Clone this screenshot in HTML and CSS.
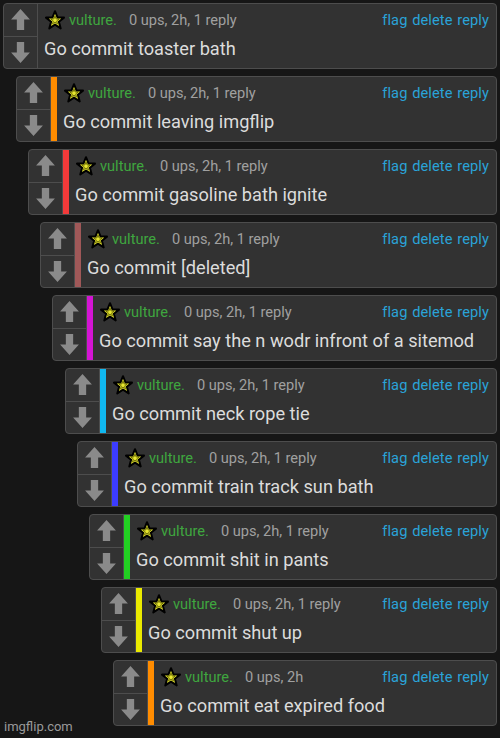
FILE: index.html
```html
<!DOCTYPE html>
<html lang="en">
<head>
    <meta charset="UTF-8">
    <meta name="viewport" content="width=device-width, initial-scale=1.0">
    <title>imgflip comments</title>
    <link rel="stylesheet" href="styles.css">
</head>
<body>
    <svg width="0" height="0" class="defs">
        <defs>
            <symbol id="star" viewBox="0 0 20 20">
                <path d="M10 1.2 L12.5 7.4 L19 7.6 L13.9 11.7 L15.7 18.4 L10 14.6 L4.3 18.4 L6.1 11.7 L1 7.6 L7.5 7.4 Z" fill="#e8e830" stroke="#000" stroke-width="2" stroke-linejoin="round"/>
                <path d="M10 6 L11.1 8.9 L14.1 9 L11.7 10.9 L12.5 13.8 L10 12.1 L7.5 13.8 L8.3 10.9 L5.9 9 L8.9 8.9 Z" fill="none" stroke="#555500" stroke-width="0.8"/>
            </symbol>
            <symbol id="up" viewBox="0 0 20 22">
                <path d="M10 1 L19 11 L13.5 11 L13.5 21 L6.5 21 L6.5 11 L1 11 Z" fill="#8a8a8a"/>
            </symbol>
            <symbol id="down" viewBox="0 0 20 22">
                <path d="M10 21 L19 11 L13.5 11 L13.5 1 L6.5 1 L6.5 11 L1 11 Z" fill="#8a8a8a"/>
            </symbol>
        </defs>
    </svg>

    <div class="comments">
        <div class="com">
            <div class="vote">
                <div class="arr"><svg><use href="#up"/></svg></div>
                <div class="arr"><svg><use href="#down"/></svg></div>
            </div>
            <div class="body">
                <div class="head">
                    <svg class="star"><use href="#star"/></svg>
                    <a class="user" href="#">vulture.</a>
                    <span class="meta">0 ups, 2h, 1 reply</span>
                    <span class="acts"><a href="#">flag</a> <a href="#">delete</a> <a href="#">reply</a></span>
                </div>
                <div class="text">Go commit toaster bath</div>
            </div>
        </div>

        <div class="com d1">
            <div class="vote">
                <div class="arr"><svg><use href="#up"/></svg></div>
                <div class="arr"><svg><use href="#down"/></svg></div>
            </div>
            <div class="bar orange"></div>
            <div class="body">
                <div class="head">
                    <svg class="star"><use href="#star"/></svg>
                    <a class="user" href="#">vulture.</a>
                    <span class="meta">0 ups, 2h, 1 reply</span>
                    <span class="acts"><a href="#">flag</a> <a href="#">delete</a> <a href="#">reply</a></span>
                </div>
                <div class="text">Go commit leaving imgflip</div>
            </div>
        </div>

        <div class="com d2">
            <div class="vote">
                <div class="arr"><svg><use href="#up"/></svg></div>
                <div class="arr"><svg><use href="#down"/></svg></div>
            </div>
            <div class="bar red"></div>
            <div class="body">
                <div class="head">
                    <svg class="star"><use href="#star"/></svg>
                    <a class="user" href="#">vulture.</a>
                    <span class="meta">0 ups, 2h, 1 reply</span>
                    <span class="acts"><a href="#">flag</a> <a href="#">delete</a> <a href="#">reply</a></span>
                </div>
                <div class="text">Go commit gasoline bath ignite</div>
            </div>
        </div>

        <div class="com d3">
            <div class="vote">
                <div class="arr"><svg><use href="#up"/></svg></div>
                <div class="arr"><svg><use href="#down"/></svg></div>
            </div>
            <div class="bar brown"></div>
            <div class="body">
                <div class="head">
                    <svg class="star"><use href="#star"/></svg>
                    <a class="user" href="#">vulture.</a>
                    <span class="meta">0 ups, 2h, 1 reply</span>
                    <span class="acts"><a href="#">flag</a> <a href="#">delete</a> <a href="#">reply</a></span>
                </div>
                <div class="text">Go commit [deleted]</div>
            </div>
        </div>

        <div class="com d4">
            <div class="vote">
                <div class="arr"><svg><use href="#up"/></svg></div>
                <div class="arr"><svg><use href="#down"/></svg></div>
            </div>
            <div class="bar magenta"></div>
            <div class="body">
                <div class="head">
                    <svg class="star"><use href="#star"/></svg>
                    <a class="user" href="#">vulture.</a>
                    <span class="meta">0 ups, 2h, 1 reply</span>
                    <span class="acts"><a href="#">flag</a> <a href="#">delete</a> <a href="#">reply</a></span>
                </div>
                <div class="text">Go commit say the n wodr infront of a sitemod</div>
            </div>
        </div>

        <div class="com d5">
            <div class="vote">
                <div class="arr"><svg><use href="#up"/></svg></div>
                <div class="arr"><svg><use href="#down"/></svg></div>
            </div>
            <div class="bar cyan"></div>
            <div class="body">
                <div class="head">
                    <svg class="star"><use href="#star"/></svg>
                    <a class="user" href="#">vulture.</a>
                    <span class="meta">0 ups, 2h, 1 reply</span>
                    <span class="acts"><a href="#">flag</a> <a href="#">delete</a> <a href="#">reply</a></span>
                </div>
                <div class="text">Go commit neck rope tie</div>
            </div>
        </div>

        <div class="com d6">
            <div class="vote">
                <div class="arr"><svg><use href="#up"/></svg></div>
                <div class="arr"><svg><use href="#down"/></svg></div>
            </div>
            <div class="bar blue"></div>
            <div class="body">
                <div class="head">
                    <svg class="star"><use href="#star"/></svg>
                    <a class="user" href="#">vulture.</a>
                    <span class="meta">0 ups, 2h, 1 reply</span>
                    <span class="acts"><a href="#">flag</a> <a href="#">delete</a> <a href="#">reply</a></span>
                </div>
                <div class="text">Go commit train track sun bath</div>
            </div>
        </div>

        <div class="com d7">
            <div class="vote">
                <div class="arr"><svg><use href="#up"/></svg></div>
                <div class="arr"><svg><use href="#down"/></svg></div>
            </div>
            <div class="bar green"></div>
            <div class="body">
                <div class="head">
                    <svg class="star"><use href="#star"/></svg>
                    <a class="user" href="#">vulture.</a>
                    <span class="meta">0 ups, 2h, 1 reply</span>
                    <span class="acts"><a href="#">flag</a> <a href="#">delete</a> <a href="#">reply</a></span>
                </div>
                <div class="text">Go commit shit in pants</div>
            </div>
        </div>

        <div class="com d8">
            <div class="vote">
                <div class="arr"><svg><use href="#up"/></svg></div>
                <div class="arr"><svg><use href="#down"/></svg></div>
            </div>
            <div class="bar yellow"></div>
            <div class="body">
                <div class="head">
                    <svg class="star"><use href="#star"/></svg>
                    <a class="user" href="#">vulture.</a>
                    <span class="meta">0 ups, 2h, 1 reply</span>
                    <span class="acts"><a href="#">flag</a> <a href="#">delete</a> <a href="#">reply</a></span>
                </div>
                <div class="text">Go commit shut up</div>
            </div>
        </div>

        <div class="com d9">
            <div class="vote">
                <div class="arr"><svg><use href="#up"/></svg></div>
                <div class="arr"><svg><use href="#down"/></svg></div>
            </div>
            <div class="bar orange"></div>
            <div class="body">
                <div class="head">
                    <svg class="star"><use href="#star"/></svg>
                    <a class="user" href="#">vulture.</a>
                    <span class="meta">0 ups, 2h</span>
                    <span class="acts"><a href="#">flag</a> <a href="#">delete</a> <a href="#">reply</a></span>
                </div>
                <div class="text">Go commit eat expired food</div>
            </div>
        </div>
    </div>

    <div class="wm">imgflip.com</div>
</body>
</html>
```

FILE: styles.css
```css
body {
    margin: 0;
    padding: 3px 3px 0 3px;
    background-color: #161616;
    font-family: Roboto, "Noto Sans", sans-serif;
    height: 735px;
    overflow: hidden;
    position: relative;
}

.defs {
    position: absolute;
}

.comments {
    display: flex;
    flex-direction: column;
    gap: 7px;
}

.com {
    display: flex;
    height: 66px;
    box-sizing: border-box;
    background-color: #323232;
    border: 1px solid #4d4d4d;
    border-radius: 4px;
    overflow: hidden;
}

.d1 { margin-left: 13px; }
.d2 { margin-left: 25px; }
.d3 { margin-left: 37px; }
.d4 { margin-left: 49px; }
.d5 { margin-left: 62px; }
.d6 { margin-left: 74px; }
.d7 { margin-left: 86px; }
.d8 { margin-left: 98px; }
.d9 { margin-left: 110px; }

.vote {
    width: 33px;
    flex-shrink: 0;
    display: flex;
    flex-direction: column;
    border-right: 1px solid #4d4d4d;
}

.arr {
    flex: 1;
    display: flex;
    align-items: center;
    justify-content: center;
}

.arr + .arr {
    border-top: 1px solid #4d4d4d;
}

.arr svg {
    width: 21px;
    height: 23px;
}

.bar {
    width: 6px;
    flex-shrink: 0;
}

.orange { background-color: #ff8c00; }
.red { background-color: #f23a3a; }
.brown { background-color: #a05858; }
.magenta { background-color: #d414d4; }
.cyan { background-color: #10b8f0; }
.blue { background-color: #3c3cff; }
.green { background-color: #22d022; }
.yellow { background-color: #eaea00; }

.body {
    flex: 1;
    min-width: 0;
    padding: 0 7px 0 6px;
    display: flex;
    flex-direction: column;
}

.head {
    display: flex;
    align-items: center;
    height: 32px;
    font-size: 14.6px;
    white-space: nowrap;
}

.star {
    width: 20px;
    height: 20px;
    margin-left: 1px;
    margin-right: 4px;
    flex-shrink: 0;
}

.user {
    color: #3fa63f;
    text-decoration: none;
    margin-right: 12px;
}

.meta {
    color: #a0a0a0;
}

.acts {
    margin-left: auto;
    letter-spacing: 0.1px;
    word-spacing: 1px;
}

.acts a {
    color: #2aa3d8;
    text-decoration: none;
}

.text {
    color: #dcdcdc;
    font-size: 18.2px;
    line-height: 24px;
    padding-top: 1px;
    white-space: nowrap;
}

.wm {
    position: absolute;
    left: 4px;
    bottom: 4px;
    color: #9a9a9a;
    font-size: 13px;
}
```
